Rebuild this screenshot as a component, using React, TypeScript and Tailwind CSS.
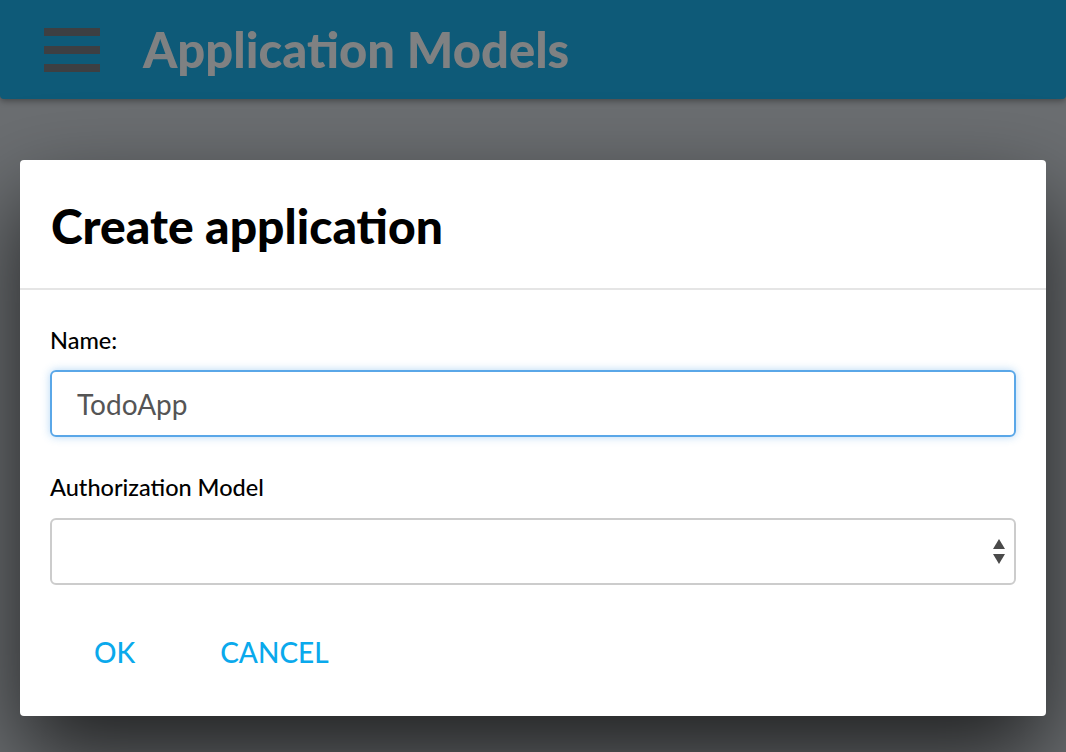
export default function App() {
  return (
    <div
      className="relative h-[752px] w-[1066px] overflow-hidden bg-[#6b6e71]"
      style={{ fontFamily: 'Lato, "Open Sans", sans-serif' }}
    >
      <header className="flex h-[99px] items-center rounded-b-[4px] bg-[#0e5a78] pl-[44px] shadow-[0_2px_6px_rgba(0,0,0,0.35)]">
        <div className="flex w-[56px] flex-col gap-[10px]">
          <span className="h-[8px] w-[56px] bg-[#3d3f42]" />
          <span className="h-[8px] w-[56px] bg-[#3d3f42]" />
          <span className="h-[8px] w-[56px] bg-[#3d3f42]" />
        </div>
        <h1 className="ml-[43px] text-[49px] font-black leading-none text-[#7f8182]">Application Models</h1>
      </header>

      <div className="px-[20px] pt-[61px]">
        <div className="rounded-[4px] bg-white shadow-[0_40px_90px_rgba(0,0,0,0.7)]">
          <div className="border-b-2 border-[#e5e5e5] px-[31px] pt-[40px] pb-[36px]">
            <h2 className="text-[48px] font-black leading-[52px] text-black">Create application</h2>
          </div>
          <div className="px-[30px] pt-[38px] pb-[50px]">
            <label className="block text-[23.5px] font-medium leading-[24px] text-black">Name:</label>
            <div className="mt-[18px] flex h-[67px] items-center rounded-[6px] border-2 border-[#5aa7e8] px-[25px] shadow-[0_0_8px_rgba(90,167,232,0.45)]">
              <span className="text-[28px] text-[#555555]">TodoApp</span>
            </div>
            <label className="mt-[38px] block text-[23.5px] font-medium leading-[24px] text-black">Authorization Model</label>
            <div className="mt-[19px] flex h-[67px] items-center justify-end rounded-[6px] border-2 border-[#cccccc] pr-[8px]">
              <svg width="14" height="26" viewBox="0 0 14 26">
                <path d="M7 0 L13 10 L1 10 Z" fill="#4a4a4a" />
                <path d="M1 15 L13 15 L7 25 Z" fill="#4a4a4a" />
              </svg>
            </div>
            <div className="mt-[53px] flex pl-[44px] text-[28px] font-medium leading-none text-[#0aa9ec]">
              <span>OK</span>
              <span className="ml-[85px]">CANCEL</span>
            </div>
          </div>
        </div>
      </div>
    </div>
  );
}
